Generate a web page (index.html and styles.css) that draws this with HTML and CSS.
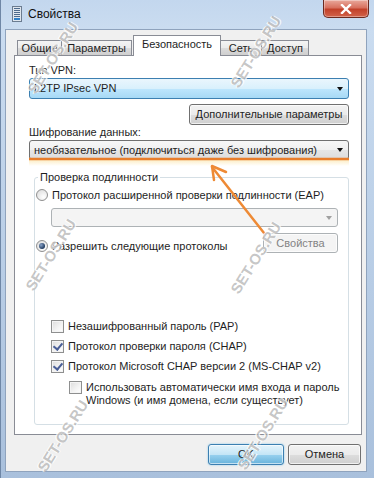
FILE: index.html
```html
<!DOCTYPE html>
<html lang="ru">
<head>
    <meta charset="UTF-8">
    <meta name="viewport" content="width=device-width, initial-scale=1.0">
    <title>Свойства</title>
    <link rel="stylesheet" href="styles.css">
</head>
<body>
    <div class="window">
        <div class="titlebar">
            <svg class="app-icon" width="10" height="16" viewBox="0 0 10 16">
                <rect x="0.5" y="0.5" width="9" height="15" fill="#dfe6ee" stroke="#6b7c90"/>
                <rect x="2" y="2" width="6" height="1" fill="#4d6a8c"/>
                <rect x="2" y="4" width="6" height="1" fill="#4d6a8c"/>
                <rect x="2" y="6" width="6" height="1" fill="#4d6a8c"/>
                <rect x="2" y="8" width="6" height="1" fill="#4d6a8c"/>
                <rect x="2" y="10" width="6" height="1" fill="#4d6a8c"/>
                <rect x="2" y="12" width="6" height="2" fill="#2f7fc7"/>
            </svg>
            <span class="title">Свойства</span>
            <div class="close">
                <svg width="12" height="10" viewBox="0 0 12 10">
                    <path d="M2 1 L10 9 M10 1 L2 9" stroke="#fff" stroke-width="2.4" stroke-linecap="square"/>
                </svg>
            </div>
        </div>

        <div class="client">
            <div class="tabs">
                <div class="tab tab-general">Общие</div>
                <div class="tab tab-params">Параметры</div>
                <div class="tab tab-security active">Безопасность</div>
                <div class="tab tab-net">Сеть</div>
                <div class="tab tab-access">Доступ</div>
            </div>

            <div class="panel">
                <div class="label">Тип VPN:</div>
                <div class="combo combo-focus">L2TP IPsec VPN<span class="arrow"></span></div>
                <div class="row-right">
                    <div class="btn btn-advanced">Дополнительные параметры</div>
                </div>
                <div class="label label-enc">Шифрование данных:</div>
                <div class="combo combo-encrypt">необязательное (подключиться даже без шифрования)<span class="arrow"></span></div>

                <fieldset class="group">
                    <legend>Проверка подлинности</legend>
                    <div class="opt opt-eap"><span class="radio"></span>Протокол расширенной проверки подлинности (EAP)</div>
                    <div class="combo combo-disabled"><span class="arrow"></span></div>
                    <div class="opt-row">
                        <div class="opt"><span class="radio checked"></span>Разрешить следующие протоколы</div>
                        <div class="btn btn-disabled">Свойства</div>
                    </div>
                    <div class="checks">
                        <div class="check"><span class="box"></span>Незашифрованный пароль (PAP)</div>
                        <div class="check"><span class="box checked"></span>Протокол проверки пароля (CHAP)</div>
                        <div class="check"><span class="box checked"></span>Протокол Microsoft CHAP версии 2 (MS-CHAP v2)</div>
                        <div class="check sub"><span class="box"></span><span>Использовать автоматически имя входа и пароль<br>Windows (и имя домена, если существует)</span></div>
                    </div>
                </fieldset>
            </div>

            <div class="footer">
                <div class="btn btn-ok">OK</div>
                <div class="btn btn-cancel">Отмена</div>
            </div>
        </div>

        <!-- annotation: orange underline and arrow -->
        <svg class="marks" width="374" height="478" viewBox="0 0 374 478">
            <defs>
                <linearGradient id="glow" x1="0" y1="0" x2="0" y2="1">
                    <stop offset="0" stop-color="#fbe9b8" stop-opacity="0.8"/>
                    <stop offset="1" stop-color="#fbe9b8" stop-opacity="0"/>
                </linearGradient>
            </defs>
            <rect x="28" y="160" width="320" height="6" fill="url(#glow)"/>
            <line x1="28" y1="159" x2="348" y2="159" stroke="#e87d2b" stroke-width="2.5"/>
            <line x1="263" y1="233" x2="211" y2="167" stroke="#ee8a35" stroke-width="2.5" stroke-linecap="round"/>
            <polyline points="213,180 211,166 225,172" fill="none" stroke="#ee8a35" stroke-width="2.5" stroke-linecap="round" stroke-linejoin="round"/>
        </svg>

        <div class="wm wm1">SET-OS.RU</div>
        <div class="wm wm2">SET-OS.RU</div>
        <div class="wm wm3">SET-OS.RU</div>
        <div class="wm wm4">SET-OS.RU</div>
        <div class="wm wm5">SET-OS.RU</div>
        <div class="wm wm6">SET-OS.RU</div>
    </div>
</body>
</html>
```

FILE: styles.css
```css
* {
    box-sizing: border-box;
}

body {
    margin: 0;
    font-family: 'Liberation Sans', Arial, sans-serif;
    font-size: 11px;
    color: #1e1e1e;
}

/* window frame */
.window {
    position: relative;
    width: 374px;
    height: 478px;
    padding: 0 7px 6px 4px;
    display: flex;
    flex-direction: column;
    overflow: hidden;
    background: linear-gradient(180deg, #c3d7ee 0%, #cadcf0 28px, #b7cce5 60%, #a9c0dc 100%);
    border-left: 1px solid #6f87a6;
}

.titlebar {
    height: 29px;
    display: flex;
    align-items: flex-start;
    padding-left: 7px;
    flex-shrink: 0;
}

.app-icon {
    margin-top: 6px;
}

.title {
    margin: 6px 0 0 6px;
    font-size: 12px;
    line-height: 16px;
    color: #111;
}

.close {
    margin-left: auto;
    margin-right: -2px;
    width: 46px;
    height: 18px;
    border: 1px solid #6b2a20;
    border-top: none;
    border-radius: 0 0 5px 5px;
    background: linear-gradient(180deg, #e9a99c 0%, #d8715f 45%, #c2412a 55%, #d2634a 100%);
    display: flex;
    align-items: center;
    justify-content: center;
    box-shadow: inset 0 0 0 1px rgba(255, 255, 255, 0.35);
}

/* client area */
.client {
    flex: 1;
    background: #f0f0f0;
    border: 1px solid #8fa3bd;
    padding: 0 5px 0 8px;
    display: flex;
    flex-direction: column;
}

.tabs {
    height: 25px;
    padding: 5px 0 0 3px;
    display: flex;
    align-items: flex-end;
}

.tab {
    height: 15px;
    border: 1px solid #898c95;
    border-bottom: none;
    background: linear-gradient(180deg, #f4f4f4 0%, #ebebeb 50%, #dcdcdc 51%, #cfcfcf 100%);
    line-height: 14px;
    text-align: center;
    margin-left: -1px;
    white-space: nowrap;
}

.tab-general { width: 45px; margin-left: 0; }
.tab-params { width: 71px; }
.tab-net { width: 42px; }
.tab-access { width: 48px; }

.tab.active {
    width: 88px;
    height: 21px;
    margin-left: 1px;
    margin-bottom: -1px;
    background: #fff;
    position: relative;
    z-index: 1;
    line-height: 17px;
}

.panel {
    width: 348px;
    background: #fff;
    border: 1px solid #898c95;
    padding: 0 12px 9px 14px;
}

.label {
    line-height: 14px;
    margin-top: 7px;
}

.label + .combo {
    margin-top: 1px;
}

.label-enc {
    margin-top: 0;
}

/* combo boxes */
.combo {
    position: relative;
    height: 21px;
    border: 1px solid #707070;
    border-radius: 3px;
    line-height: 19px;
    padding-left: 4px;
    white-space: nowrap;
    background: linear-gradient(180deg, #f2f2f2 0%, #ebebeb 50%, #dddddd 51%, #cfcfcf 100%);
}

.combo-focus {
    border-color: #3c7fb1;
    background: linear-gradient(180deg, #eaf6fd 0%, #d9f0fc 50%, #bee6fd 51%, #a7d9f5 100%);
}

.combo-encrypt {
    height: 20px;
    line-height: 18px;
    background: linear-gradient(180deg, #f7f7f7 0%, #f0f0f0 50%, #e6e6e6 51%, #dcdcdc 100%);
}

.combo-disabled {
    height: 19px;
    width: 287px;
    margin: 6px 0 0 16px;
    border-color: #adb2b5;
    background: #f4f4f4;
}

.arrow {
    position: absolute;
    right: 5px;
    top: 50%;
    margin-top: -2px;
    border-left: 3.5px solid transparent;
    border-right: 3.5px solid transparent;
    border-top: 4px solid #111;
}

.combo-disabled .arrow {
    border-top-color: #a0a0a0;
}

/* buttons */
.btn {
    height: 21px;
    border: 1px solid #707070;
    border-radius: 3px;
    text-align: center;
    line-height: 19px;
    white-space: nowrap;
    background: linear-gradient(180deg, #f2f2f2 0%, #ebebeb 50%, #dddddd 51%, #cfcfcf 100%);
    box-shadow: inset 0 0 0 1px rgba(255, 255, 255, 0.7);
}

.row-right {
    display: flex;
    justify-content: flex-end;
    margin-top: 5px;
}

.btn-advanced {
    width: 160px;
}

.btn-disabled {
    width: 75px;
    height: 20px;
    line-height: 18px;
    border-color: #adb2b5;
    background: #f4f4f4;
    color: #838383;
}

.footer {
    display: flex;
    justify-content: flex-end;
    gap: 4px;
    margin-top: 9px;
}

.btn-ok {
    width: 76px;
    border-color: #3c7fb1;
    background: linear-gradient(180deg, #e5f4fc 0%, #c4e5f6 50%, #98d1ef 51%, #68b3db 100%);
    box-shadow: inset 0 0 0 1px rgba(255, 255, 255, 0.6), 0 0 2px #7ec4ea;
}

.btn-cancel {
    width: 73px;
}

/* group box */
.group {
    margin: 10px 0 0 5px;
    padding: 0 0 17px 0;
    border: 1px solid #d5dfe5;
    border-radius: 3px;
    min-width: 0;
}

.group legend {
    padding: 0 2px;
    margin-left: 3px;
    line-height: 14px;
}

.opt {
    display: flex;
    align-items: center;
    line-height: 14px;
    padding-left: 1px;
    white-space: nowrap;
}

.opt-eap {
    margin-top: 4px;
}

.opt-row {
    display: flex;
    justify-content: space-between;
    align-items: flex-end;
    margin-top: 6px;
    padding-right: 10px;
}

.radio {
    width: 12px;
    height: 12px;
    margin-right: 4px;
    border: 1px solid #8f8f8f;
    border-radius: 50%;
    background: radial-gradient(circle at 65% 70%, #fff 0%, #e4e4e4 70%, #cfcfcf 100%);
    position: relative;
    flex-shrink: 0;
}

.radio.checked::after {
    content: '';
    position: absolute;
    left: 2px;
    top: 2px;
    width: 6px;
    height: 6px;
    border-radius: 50%;
    background: radial-gradient(circle at 35% 35%, #8aa4c8 0%, #1f3a60 70%, #10223c 100%);
}

.checks {
    margin-top: 63px;
}

.check {
    display: flex;
    align-items: center;
    height: 20px;
    padding-left: 16px;
    white-space: nowrap;
}

.check.sub {
    align-items: flex-start;
    height: auto;
    margin-top: 5px;
    padding-left: 34px;
    line-height: 13px;
}

.box {
    width: 13px;
    height: 13px;
    margin-right: 4px;
    border: 1px solid #8e8f8f;
    background: linear-gradient(135deg, #dcdcdc 0%, #f4f4f4 60%, #fff 100%);
    box-shadow: inset 0 0 0 1px #f4f4f4;
    position: relative;
    flex-shrink: 0;
}

.box.checked::after {
    content: '';
    position: absolute;
    left: 3px;
    top: 0px;
    width: 4px;
    height: 7px;
    border-right: 2px solid #4a5f97;
    border-bottom: 2px solid #4a5f97;
    transform: rotate(40deg);
}

/* overlays */
.marks {
    position: absolute;
    left: 0;
    top: 0;
    pointer-events: none;
}

.wm {
    position: absolute;
    width: 100px;
    height: 20px;
    line-height: 20px;
    text-align: center;
    font-weight: bold;
    font-size: 15px;
    color: rgba(150, 150, 150, 0.55);
    text-shadow: -1px -1px 0 rgba(255, 255, 255, 0.8), 1px 1px 0 rgba(255, 255, 255, 0.8);
    transform: rotate(-58deg);
    pointer-events: none;
}

.wm1 { left: 2px; top: 48px; }
.wm2 { left: 205px; top: 42px; }
.wm3 { left: 0px; top: 245px; }
.wm4 { left: 205px; top: 248px; }
.wm5 { left: 12px; top: 426px; }
.wm6 { left: 212px; top: 424px; }
```
